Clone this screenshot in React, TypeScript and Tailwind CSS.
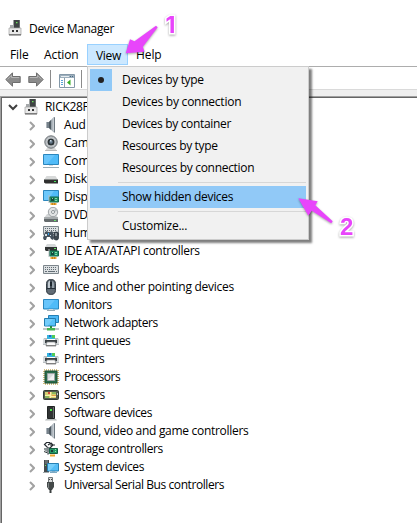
import type { ReactNode } from 'react';

function Icon({ children }: { children: ReactNode }) {
  return (
    <svg width="16" height="16" viewBox="0 0 16 16" className="shrink-0">
      {children}
    </svg>
  );
}

const Usb = () => (
  <Icon>
    <path d="M5.500 0H12v8H5.500z" fill="#3f4444" />
    <path d="M11 0h1v8h-1z" fill="#6a6e6e" />
    <path d="M8 2h1.500v1.200H8z" fill="#6ee25c" />
    <path d="M2 5h4v3H2z" fill="#a5a8aa" />
    <path d="M1 8h12v7H1z" fill="#e9e9e9" stroke="#a0a0a0" strokeWidth=".7" />
    <path d="M1 14h12v1.500H1z" fill="#7d7d7d" />
    <path d="M4 10h2v2H4zM8 10h2v2H8z" fill="#333" />
  </Icon>
);

const Speaker = () => (
  <Icon>
    <path d="M3 5h4v6H3z" fill="#76818a" />
    <path d="M3 5h1v6H3z" fill="#adb5bb" />
    <path d="M6 5l5-5v15.500L6 11z" fill="#9aa4ac" />
    <path d="M6 5l2-2v10l-2-2z" fill="#4f5a62" />
    <path d="M9.500 1.500L12 0v15.500l-2.500-1.500z" fill="#c3cad0" />
    <path d="M11.500.3v15.200" stroke="#6d7880" />
  </Icon>
);

const Camera = () => (
  <Icon>
    <path d="M4 13h8l2 3H2z" fill="#dadada" />
    <path d="M2 15.500h12" stroke="#aaa" strokeWidth=".7" />
    <circle cx="8" cy="7" r="6.200" fill="#b7bcc0" stroke="#6d7377" />
    <circle cx="8" cy="7" r="4.300" fill="#d9dcde" />
    <circle cx="8" cy="7" r="3.500" fill="#2c3438" />
    <circle cx="8" cy="7" r="1.800" fill="#65798a" />
    <path d="M7 5h1.500v1.500H7z" fill="#cbdce9" />
  </Icon>
);

const Monitor = ({ keyboard = false }: { keyboard?: boolean }) => (
  <Icon>
    <path d={keyboard ? 'M.5 1.500h15v10H.5z' : 'M.5 2.500h15v9.500H.5z'} fill="#4fbbf8" stroke="#2b86bd" />
    <path d={keyboard ? 'M1 2h11L4 11H1z' : 'M1 3h11L5 11H1z'} fill="#68c5fb" />
    <path d="M6 12h4v1H6z" fill="#d3d8db" />
    <path d={keyboard ? 'M0 14.500h16' : 'M4 13.500h8'} stroke="#9bacb5" />
  </Icon>
);

const Disk = () => (
  <Icon>
    <path d="M3.500 5h9L15 9H1z" fill="#d7d9d9" />
    <path d="M1 8.500h14v4H2.500L1 11.500z" fill="#30302f" />
    <path d="M1 8.500h14" stroke="#85898a" strokeWidth=".7" />
    <path d="M11 10h2v1h-2z" fill="#47e55c" />
  </Icon>
);

const Card = () => (
  <>
    <path d="M6.500 8h9v5h-9z" fill="#259269" stroke="#11694b" />
    <path d="M6 6v8" stroke="#b7bfc0" />
    <path d="M8 9h3v3H8z" fill="#164b3e" />
    <path d="M9 9h1v1H9zM12 9h2v1h-2zM12 11h2v1h-2z" fill="#7eddab" />
    <path d="M7.500 14h6v2h-6z" fill="#f0a72f" />
    <path d="M9.500 14v2M11.500 14v2" stroke="#9c6c20" strokeWidth=".6" />
  </>
);

const Display = () => (
  <Icon>
    <path d="M.5 1.500h15v10H.5z" fill="#4fbbf8" stroke="#2b86bd" />
    <path d="M1 2h10L5 11H1z" fill="#6dc8fb" />
    <Card />
  </Icon>
);

const Dvd = () => (
  <Icon>
    <path d="M4 7h9l2 4H1z" fill="#d3d6d7" />
    <circle cx="10" cy="5" r="4.700" fill="#e1e3e4" stroke="#8b9194" strokeWidth=".8" />
    <path d="M10 5l3-4a5 5 0 0 1 1.500 3z" fill="#b8bec1" />
    <circle cx="10" cy="5" r="1.500" fill="#fff" stroke="#767e82" strokeWidth=".8" />
    <path d="M1 10.500h14V15H2l-1-1z" fill="#656b6d" />
    <path d="M1 10.500h14v1.300H1z" fill="#b5b9bb" />
    <path d="M11 13h2v1h-2z" fill="#67e46d" />
  </Icon>
);

const KeyRows = ({ y }: { y: number }) => (
  <g transform={`translate(0 ${y})`}>
    <path d="M.5.500h15v8H.5z" fill="#dce0e2" stroke="#7d868c" />
    <path d="M2 2.500h12M2 4.500h12" stroke="#626d75" strokeDasharray="1 1" />
    <path d="M2 6.500h2M5 6.500h7M13 6.500h1" stroke="#626d75" />
  </g>
);

const Keyboard = () => (
  <Icon>
    <KeyRows y={4} />
  </Icon>
);

const Hid = () => (
  <Icon>
    <KeyRows y={1} />
    <path d="M2 7l2-1 1 1h2l2-1 1 2 1 5-1 2-2-1-1-2H4l-1 3H1L0 13z" fill="#46525d" />
    <path d="M2 9h2v2H2zM7 10h1v1H7z" fill="#d4e1e9" />
    <path d="M5 8h1v2H5z" fill="#36a5ed" />
    <rect x="11" y="7" width="4.500" height="8" rx="2" fill="#3f4850" stroke="#202b33" strokeWidth=".7" />
    <path d="M13 8v3" stroke="#d4dde3" />
  </Icon>
);

const Ide = () => (
  <Icon>
    <path d="M4 1h8l2 3H2z" fill="#d5d8d9" />
    <path d="M2 4h12v4H3L2 7z" fill="#303333" />
    <path d="M11 5h2v1h-2z" fill="#65df65" />
    <Card />
  </Icon>
);

const Mouse = () => (
  <Icon>
    <rect x="3.600" y=".6" width="8.800" height="14.800" rx="4.100" fill="#626c75" stroke="#263038" />
    <path d="M5 3.500Q6 1.500 7 1.500V9H5z" fill="#c2cbd2" />
    <path d="M9 2q2 1 2 3v4H9z" fill="#939fa8" />
    <path d="M8 1v8M4 9.500h8" stroke="#252f38" />
    <path d="M7 3h2v4H7z" fill="#1d262e" />
  </Icon>
);

const Network = () => (
  <Icon>
    <path d="M5.500.5h10v7h-10z" fill="#4cb8f5" stroke="#2580b6" />
    <path d="M1.500 3.500h11v7.500h-11z" fill="#58c2fa" stroke="#247cae" />
    <path d="M2 4h8l-5 6.500H2z" fill="#74cdfb" />
    <path d="M7 11h2v2H7z" fill="#2b8a42" />
    <path d="M0 14h16" stroke="#c1c8c7" strokeWidth="2" />
    <path d="M4 13h8v2.500H4z" fill="#47b552" />
  </Icon>
);

const Printer = () => (
  <Icon>
    <path d="M4 2h8v4H4z" fill="#35b4df" />
    <path d="M9 2h3v3H9z" fill="#54cb55" />
    <path d="M6 2h2v2H6z" fill="#2469bc" />
    <path d="M1 5h3v2h8V5h3l1 2v5H0V7z" fill="#b9bec1" />
    <path d="M1 7h14v3H1z" fill="#3b4144" />
    <path d="M0 6h2v5H0zM14 6h2v5h-2z" fill="#d6dadc" />
    <path d="M4 9h8l1 4H3z" fill="#fafafa" stroke="#858b8e" strokeWidth=".7" />
    <path d="M3 12.600h10" stroke="#777" />
  </Icon>
);

const Processor = () => (
  <Icon>
    <rect x="1" y="1" width="14" height="14" fill="none" stroke="#c4a95a" strokeWidth="1.600" strokeDasharray="1 1" />
    <path d="M2 2h12v12H2z" fill="#286b4a" stroke="#1f5037" />
    <path d="M4.500 4.500h7v7h-7z" fill="#d8dbdc" stroke="#9ea5a5" />
    <path d="M5 11l6-6v6z" fill="#f2f3f3" />
  </Icon>
);

const Sensor = () => (
  <Icon>
    <rect x=".5" y="3.500" width="15" height="9" rx="1" fill="#535b50" stroke="#343c34" />
    <path d="M2 5h11v6H2z" fill="#d5d071" />
    <path d="M2 8h5V5h1v6H7V9H2zM8 9h5v1H8z" fill="#fff0ae" />
    <path d="M2 9h4v2H2zM9 5h4v2H9z" fill="#8cb65c" />
    <path d="M5 5h2v2H5z" fill="#d44938" />
    <path d="M9 8h4v1H9z" fill="#e4a043" />
    <path d="M14 6h1v2h-1z" fill="#bfc8bd" />
  </Icon>
);

const Software = () => (
  <Icon>
    <path d="M4.500 1.500h7v12h-7z" fill="#303333" stroke="#202323" />
    <path d="M10.500 2v11" stroke="#676d6d" />
    <path d="M7 4h2v2H7z" fill="#4ee64d" />
    <path d="M3 14h10l1 1.500H2z" fill="#b9bebe" />
  </Icon>
);

const Storage = () => (
  <Icon>
    <path d="M7 1.500H3.500l-2 2L5 7h3M5 4l3-2 2 2-4 4M7 4h5" fill="none" stroke="#252b30" strokeWidth="1.200" />
    <path d="M1 7h5v4H4L1 9z" fill="#8d9698" />
    <path d="M1 10.500l5 2" stroke="#333b3d" />
    <path d="M6.500 7.500h8v5h-8z" fill="#249665" stroke="#155f43" />
    <path d="M8 9h2v2H8z" fill="#153d35" />
    <path d="M12 8h1v1h-1zM12 10h1v1h-1z" fill="#89eab0" />
    <path d="M5 6v8" stroke="#757f82" />
    <path d="M7 13.500h5v2H7z" fill="#efa52f" />
  </Icon>
);

const System = () => (
  <Icon>
    <path d="M1 1h5v12H1z" fill="#454b4d" />
    <path d="M2 2h3M2 4h3" stroke="#9ba1a2" strokeWidth=".8" />
    <path d="M2 6h1v1H2z" fill="#6be45f" />
    <path d="M0 13.500h6" stroke="#a0a9ac" />
    <path d="M4.500 4.500h11v7.500h-11z" fill="#55bef7" stroke="#2881b4" />
    <path d="M5 5h8l-6 6.500H5z" fill="#78cffb" />
    <path d="M9 12h3v1H9zM7 13h7v1H7z" fill="#7caac4" />
  </Icon>
);

const Plug = () => (
  <Icon>
    <path d="M5.500.5h4v5h-4z" fill="#d9dbdb" stroke="#727778" />
    <path d="M6 2.500h1M8 2.500h1" stroke="#444" />
    <path d="M4 5h7v5l-2 3H6l-2-3z" fill="#444949" />
    <path d="M5 6h1v5H5z" fill="#7a8081" />
    <path d="M7.500 12v4" stroke="#3b4040" strokeWidth="2" />
  </Icon>
);

const devices: [string, () => ReactNode, string][] = [
  ['Aud', Speaker, 'tracking-[-0.2px]'],
  ['Cam', Camera, 'tracking-[-0.2px]'],
  ['Com', () => <Monitor keyboard />, 'tracking-[-0.2px]'],
  ['Disk', Disk, 'tracking-[-0.2px]'],
  ['Disp', Display, 'tracking-[-0.3px]'],
  ['DVD', Dvd, 'tracking-[-0.3px]'],
  ['Hum', Hid, 'tracking-[-0.2px]'],
  ['IDE ATA/ATAPI controllers', Ide, 'tracking-[-0.32px]'],
  ['Keyboards', Keyboard, 'tracking-[-0.48px]'],
  ['Mice and other pointing devices', Mouse, 'tracking-[-0.26px]'],
  ['Monitors', () => <Monitor />, 'tracking-[-0.33px]'],
  ['Network adapters', Network, 'tracking-[-0.42px]'],
  ['Print queues', Printer, 'tracking-[-0.4px]'],
  ['Printers', Printer, 'tracking-[-0.48px]'],
  ['Processors', Processor, 'tracking-[-0.5px]'],
  ['Sensors', Sensor, 'tracking-[-0.52px]'],
  ['Software devices', Software, 'tracking-[-0.38px]'],
  ['Sound, video and game controllers', Speaker, 'tracking-[-0.3px]'],
  ['Storage controllers', Storage, 'tracking-[-0.38px]'],
  ['System devices', System, 'tracking-[-0.34px]'],
  ['Universal Serial Bus controllers', Plug, 'tracking-[-0.42px]'],
];

function MenuItem({ label, className = '', selected = false, active = false }: { label: string; className?: string; selected?: boolean; active?: boolean }) {
  return (
    <div className={`flex h-[22px] items-center ${active ? 'bg-[#91c9f7]' : ''}`}>
      <span className={`mr-2.5 flex h-[22px] w-[22px] items-center justify-center ${selected ? 'bg-[#91c9f7]' : ''}`}>
        {selected && <span className="size-1.5 rounded-full bg-[#222]" />}
      </span>
      <span className={className}>{label}</span>
    </div>
  );
}

const Separator = () => (
  <div className="flex h-[7px] items-center pl-7">
    <span className="h-px w-full bg-[#d7d7d7]" />
  </div>
);

const ToolArrow = ({ flip = false }: { flip?: boolean }) => (
  <svg width="16" height="15" viewBox="0 0 16 15" className={flip ? '-scale-x-100' : ''}>
    <path d="M.8 7.500L7.500.8v3.700h7.700v6H7.500v3.700z" fill="#8b8b8b" stroke="#6e6e6e" />
    <path d="M2.300 7.500l4.200-4.200v2.200h7.700" fill="none" stroke="#b5b5b5" />
  </svg>
);

export default function App() {
  return (
    <div className="relative flex h-[523px] w-[417px] flex-col overflow-hidden bg-white font-['Open_Sans','Noto_Sans',sans-serif] text-[12px] leading-[18px] whitespace-nowrap text-black">
      <header className="flex h-11 items-center pt-[14px] pl-[8px]">
        <span className="mb-[2px]"><Usb /></span>
        <span className="ml-[5px] tracking-[-0.33px]">Device Manager</span>
      </header>
      <nav className="flex h-[22px] shrink-0 items-start">
        <span className="w-[35px] pt-[2px] pl-[10px] tracking-[-0.1px]">File</span>
        <span className="w-[52px] pt-[2px] pl-[9px] tracking-[-0.1px]">Action</span>
        <span className="h-[21px] w-[41px] border border-[#99d1ff] bg-[#cce8ff] pt-[2px] pl-[8px] tracking-[-0.3px]">View</span>
        <span className="pt-[2px] pl-2 tracking-[-0.1px]">Help</span>
      </nav>
      <div className="flex h-[24px] shrink-0 items-center border-y border-t-[#adadad] border-b-[#dadada] pt-[2px] pl-[5px]">
        <ToolArrow />
        <span className="ml-[7px]"><ToolArrow flip /></span>
        <span className="ml-[6px] h-[18px] w-px bg-[#8b8b8b]" />
        <svg width="16" height="14" viewBox="0 0 16 14" className="mt-[3px] ml-2">
          <path d="M.5.500h15v13H.5z" fill="#fff" stroke="#8498a8" />
          <path d="M1 1h14v3H1z" fill="#9dafbd" />
          <path d="M2 2.500h8" stroke="#e7edf1" />
          <path d="M11 2.500h1M13 2.500h1" stroke="#426781" />
          <path d="M5.500 4v9" stroke="#8ba0ae" />
          <path d="M2 6.500h2M2 8.500h2M2 10.500h2" stroke="#59a3d6" />
          <path d="M11.500 5.500v6L8 8.500z" fill="#35ad23" />
        </svg>
        <span className="ml-[6px] h-[18px] w-px bg-[#8b8b8b]" />
      </div>
      <main className="flex grow flex-col border-t-[6px] border-[#efefef]">
        <div className="flex grow border-t border-l border-[#a0a0a0]">
          <div className="grow border-t border-l border-[#656565]">
            <div className="flex h-[18px] items-center pl-[6px]">
              <svg width="10" height="7" viewBox="0 0 10 7">
                <path d="M1 1l4 4 4-4" fill="none" stroke="#404040" strokeWidth="2" />
              </svg>
              <span className="ml-[6px]"><Usb /></span>
              <span className="ml-[5px] tracking-[-0.3px]">RICK28F</span>
            </div>
            {devices.map(([label, Glyph, labelClass]) => (
              <div key={label} className="flex h-[18px] items-center pl-[27px]">
                <svg width="6" height="10" viewBox="0 0 6 10" className="mt-px">
                  <path d="M1 1l4 4-4 4" fill="none" stroke="#a2a2a2" strokeWidth="2" />
                </svg>
                <span className="ml-2"><Glyph /></span>
                <span className={`ml-[5px] ${labelClass}`}>{label}</span>
              </div>
            ))}
          </div>
        </div>
      </main>
      <div className="absolute top-[66px] left-[87px] h-[174px] w-[222px] border border-[#ccc] bg-[#f1f1f1] p-[2px] shadow-[3px_3px_2px_rgba(0,0,0,0.5)]">
        <MenuItem label="Devices by type" className="tracking-[-0.33px]" selected />
        <MenuItem label="Devices by connection" className="tracking-[-0.24px]" />
        <MenuItem label="Devices by container" className="tracking-[-0.33px]" />
        <MenuItem label="Resources by type" className="tracking-[-0.35px]" />
        <MenuItem label="Resources by connection" className="tracking-[-0.3px]" />
        <Separator />
        <MenuItem label="Show hidden devices" className="tracking-[-0.32px]" active />
        <Separator />
        <MenuItem label="Customize..." className="tracking-[-0.25px]" />
      </div>
      <svg width="417" height="260" viewBox="0 0 417 260" className="pointer-events-none absolute top-0 left-0 drop-shadow-[0_1px_1px_rgba(0,0,0,0.35)]">
        <path d="M125.700 53.300L130 39.300l4.500 2L156 25.700l1.700 1.500-14.800 19.500 1.600 5z" fill="#e845fb" />
        <path d="M298.300 198.300l19.400 3-2.400 4 17.400 16-1.400 2-19.600-12.600-3.400 5z" fill="#e845fb" />
        <g fill="#e845fb" stroke="#fff" strokeWidth="3" paintOrder="stroke" className="font-['Liberation_Sans',sans-serif] text-[24px] font-bold">
          <text x="165.500" y="33" className="font-['Inter',sans-serif] text-[23px]">1</text>
          <text x="340" y="235">2</text>
        </g>
      </svg>
    </div>
  );
}
